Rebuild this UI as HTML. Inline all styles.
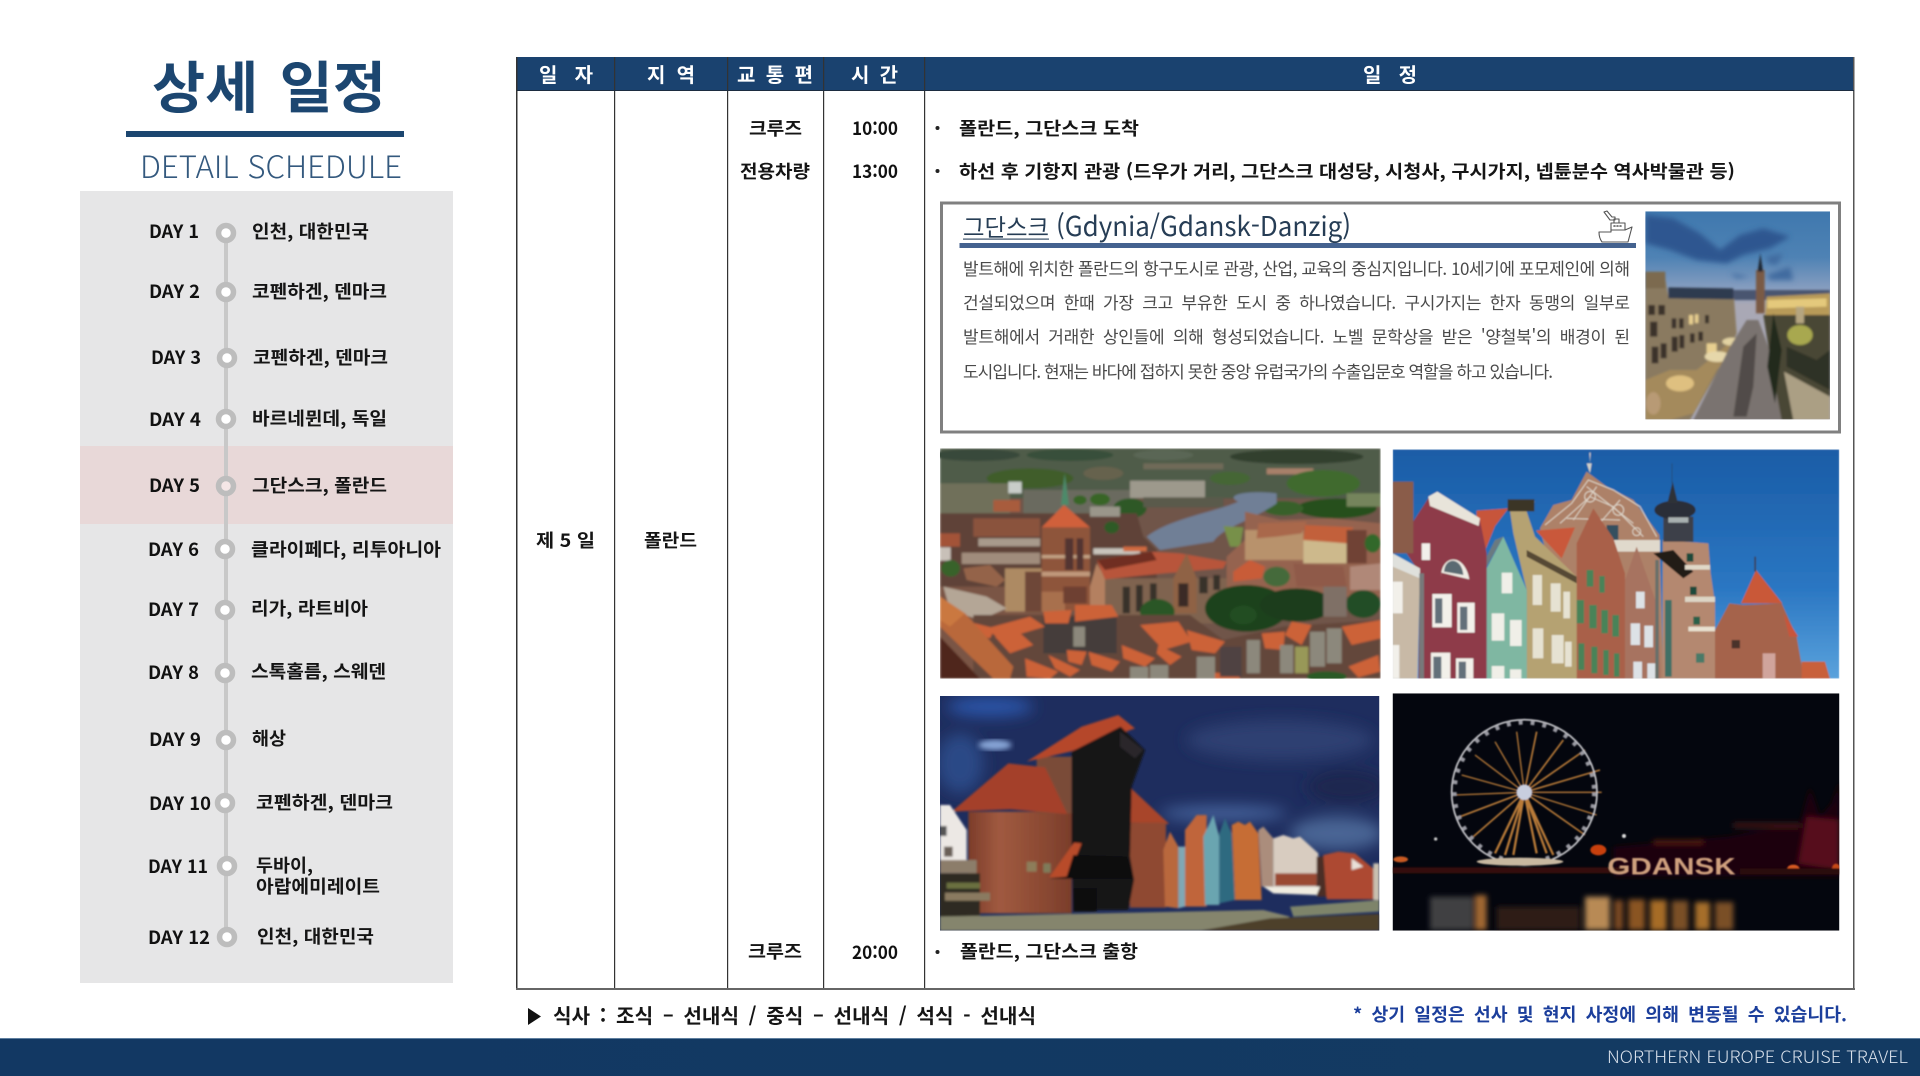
<!DOCTYPE html>
<html lang="ko"><head><meta charset="utf-8"><title>상세 일정</title>
<style>
html,body{margin:0;padding:0;background:#fff;width:1920px;height:1076px;overflow:hidden}
svg{display:block}
text{font-family:"Liberation Sans","Noto Sans CJK KR",sans-serif;white-space:pre}
.b{font-family:"Noto Sans CJK KR","Liberation Sans",sans-serif;font-weight:700;fill:#111;font-size:18px}
.h{font-family:"Noto Sans CJK KR","Liberation Sans",sans-serif;font-weight:700;fill:#fff;font-size:20px}
.k{font-family:"Noto Sans CJK KR","Liberation Sans",sans-serif;font-weight:700;fill:#151515;font-size:18px}
.t{font-family:"Noto Sans CJK KR","Liberation Sans",sans-serif;font-weight:400;fill:#4a4a4a;font-size:17px}
</style></head><body>
<svg width="1920" height="1076" viewBox="0 0 1920 1076" xmlns="http://www.w3.org/2000/svg">
<defs>
<filter id="bl" x="-2%" y="-2%" width="104%" height="104%"><feGaussianBlur stdDeviation="3"/></filter>
<filter id="bs" x="-2%" y="-2%" width="104%" height="104%"><feGaussianBlur stdDeviation="2"/></filter>
<filter id="bx" x="-30%" y="-30%" width="160%" height="160%"><feGaussianBlur stdDeviation="22"/></filter>
<filter id="bm" x="-10%" y="-10%" width="120%" height="120%"><feGaussianBlur stdDeviation="8"/></filter>
<linearGradient id="skyB" x1="0" y1="0" x2="0" y2="1"><stop offset="0" stop-color="#1a5ca6"/><stop offset=".6" stop-color="#2a76c2"/><stop offset="1" stop-color="#5aa2dc"/></linearGradient>
<linearGradient id="skyE" x1="0" y1="0" x2="0" y2="1"><stop offset="0" stop-color="#3f78ae"/><stop offset=".22" stop-color="#4e82b4"/><stop offset=".38" stop-color="#8a9fc0"/><stop offset=".45" stop-color="#a9a8b5"/></linearGradient>
<linearGradient id="brick" x1="0" y1="0" x2="1" y2="0"><stop offset="0" stop-color="#7c3c2a"/><stop offset=".3" stop-color="#a05a40"/><stop offset=".7" stop-color="#8c4a33"/><stop offset="1" stop-color="#7a3d2b"/></linearGradient>
<linearGradient id="foot" x1="0" y1="0" x2="1" y2="0"><stop offset="0" stop-color="#123863"/><stop offset="1" stop-color="#133a62"/></linearGradient>
<clipPath id="ca"><rect x="30" y="25" width="1322" height="691"/></clipPath>
<clipPath id="cb"><rect x="38" y="28" width="1340" height="688"/></clipPath>
<clipPath id="cc"><rect x="30" y="18" width="1318" height="704"/></clipPath>
<clipPath id="cd"><rect x="38" y="10" width="1340" height="712"/></clipPath>
<clipPath id="ce"><rect x="46" y="34" width="554" height="624"/></clipPath>
</defs>
<rect width="1920" height="1076" fill="#fff"/>

<!-- LEFT -->
<text x="152" y="108" textLength="234" lengthAdjust="spacingAndGlyphs" style="font-family:'Noto Sans CJK KR','Liberation Sans',sans-serif;font-weight:700;font-size:56px;word-spacing:5px;fill:#1c4670">상세 일정</text>
<rect x="126" y="131" width="278" height="6" fill="#1c4670"/>
<text x="140" y="178" textLength="262" lengthAdjust="spacingAndGlyphs" style="font-family:'Noto Sans CJK KR','Liberation Sans',sans-serif;font-size:31px;font-weight:300;fill:#34597e">DETAIL SCHEDULE</text>
<rect x="80" y="191" width="373" height="792" fill="#e6e6e7"/>
<rect x="80" y="446" width="373" height="78" fill="#e8d8d8"/>
<rect x="224" y="233" width="4" height="704" fill="#c8c8c8"/>
<g fill="#fff" stroke="#bdbdbd" stroke-width="5.5">
<circle cx="226" cy="233" r="7.5"/><circle cx="226" cy="292" r="7.5"/><circle cx="227" cy="358" r="7.5"/><circle cx="226" cy="419" r="7.5"/>
<circle cx="226" cy="486" r="7.5" fill="#f5e6e6"/><circle cx="225" cy="549" r="7.5"/><circle cx="225" cy="610" r="7.5"/><circle cx="225" cy="673" r="7.5"/>
<circle cx="226" cy="740" r="7.5"/><circle cx="225" cy="803" r="7.5"/><circle cx="227" cy="866" r="7.5"/><circle cx="227" cy="937" r="7.5"/>
</g>
<g>
<text class="b" x="149" y="238" textLength="50" lengthAdjust="spacingAndGlyphs">DAY 1</text>
<text class="b" x="149" y="298" textLength="51" lengthAdjust="spacingAndGlyphs">DAY 2</text>
<text class="b" x="151" y="364" textLength="50" lengthAdjust="spacingAndGlyphs">DAY 3</text>
<text class="b" x="149" y="426" textLength="52" lengthAdjust="spacingAndGlyphs">DAY 4</text>
<text class="b" x="149" y="492" textLength="51" lengthAdjust="spacingAndGlyphs">DAY 5</text>
<text class="b" x="148" y="556" textLength="51" lengthAdjust="spacingAndGlyphs">DAY 6</text>
<text class="b" x="148" y="616" textLength="51" lengthAdjust="spacingAndGlyphs">DAY 7</text>
<text class="b" x="148" y="679" textLength="51" lengthAdjust="spacingAndGlyphs">DAY 8</text>
<text class="b" x="149" y="746" textLength="52" lengthAdjust="spacingAndGlyphs">DAY 9</text>
<text class="b" x="149" y="810" textLength="62" lengthAdjust="spacingAndGlyphs">DAY 10</text>
<text class="b" x="148" y="873" textLength="60" lengthAdjust="spacingAndGlyphs">DAY 11</text>
<text class="b" x="148" y="944" textLength="62" lengthAdjust="spacingAndGlyphs">DAY 12</text>
<text class="k" x="252" y="238" textLength="117" lengthAdjust="spacingAndGlyphs">인천, 대한민국</text>
<text class="k" x="252" y="298" textLength="135" lengthAdjust="spacingAndGlyphs">코펜하겐, 덴마크</text>
<text class="k" x="253" y="364" textLength="135" lengthAdjust="spacingAndGlyphs">코펜하겐, 덴마크</text>
<text class="k" x="252" y="425" textLength="135" lengthAdjust="spacingAndGlyphs">바르네뮌데, 독일</text>
<text class="k" x="252" y="492" textLength="135" lengthAdjust="spacingAndGlyphs">그단스크, 폴란드</text>
<text class="k" x="251" y="556" textLength="190" lengthAdjust="spacingAndGlyphs">클라이페다, 리투아니아</text>
<text class="k" x="251" y="615" textLength="117" lengthAdjust="spacingAndGlyphs">리가, 라트비아</text>
<text class="k" x="251" y="678" textLength="135" lengthAdjust="spacingAndGlyphs">스톡홀름, 스웨덴</text>
<text class="k" x="252" y="745" textLength="34" lengthAdjust="spacingAndGlyphs">해상</text>
<text class="k" x="256" y="809" textLength="137" lengthAdjust="spacingAndGlyphs">코펜하겐, 덴마크</text>
<text class="k" x="256" y="872" textLength="57" lengthAdjust="spacingAndGlyphs">두바이,</text>
<text class="k" x="256" y="893" textLength="124" lengthAdjust="spacingAndGlyphs">아랍에미레이트</text>
<text class="k" x="257" y="943" textLength="117" lengthAdjust="spacingAndGlyphs">인천, 대한민국</text>
</g>

<!-- TABLE -->
<rect x="517" y="57" width="1337" height="34" fill="#1a426f"/>
<g fill="#333">
<rect x="516" y="57" width="1.5" height="932"/><rect x="614" y="57" width="1.2" height="932"/><rect x="727" y="57" width="1.2" height="932"/><rect x="823" y="57" width="1.2" height="932"/><rect x="924" y="57" width="1.2" height="932"/>
<rect x="1853" y="57" width="1.5" height="932" fill="#555"/><rect x="516" y="988" width="1339" height="2" fill="#666"/>
<rect x="517" y="90" width="1337" height="1" fill="#1c2c40"/>
</g>
<text class="h" x="539" y="82" textLength="54" lengthAdjust="spacing">일 자</text>
<text class="h" x="647" y="82" textLength="48" lengthAdjust="spacing">지 역</text>
<text class="h" x="737" y="82" textLength="76" lengthAdjust="spacing">교 통 편</text>
<text class="h" x="851" y="82" textLength="47" lengthAdjust="spacing">시 간</text>
<text class="h" x="1363" y="82" textLength="54" lengthAdjust="spacing">일 정</text>

<text class="k" x="536" y="547" textLength="59" lengthAdjust="spacingAndGlyphs">제 5 일</text>
<text class="k" x="644" y="547" textLength="53" lengthAdjust="spacingAndGlyphs">폴란드</text>
<text class="k" x="749" y="135" textLength="53" lengthAdjust="spacingAndGlyphs">크루즈</text>
<text class="k" x="740" y="178" textLength="70" lengthAdjust="spacingAndGlyphs">전용차량</text>
<text class="k" x="748" y="958" textLength="54" lengthAdjust="spacingAndGlyphs">크루즈</text>
<text class="b" x="852" y="135" textLength="46" lengthAdjust="spacingAndGlyphs">10:00</text>
<text class="b" x="852" y="178" textLength="46" lengthAdjust="spacingAndGlyphs">13:00</text>
<text class="b" x="852" y="959" textLength="46" lengthAdjust="spacingAndGlyphs">20:00</text>
<circle cx="937.500" cy="128" r="2" fill="#222"/><circle cx="937.500" cy="171" r="2" fill="#222"/><circle cx="937.500" cy="952" r="2" fill="#222"/>
<text class="k" x="959" y="135" textLength="180" lengthAdjust="spacingAndGlyphs">폴란드, 그단스크 도착</text>
<text class="k" x="959" y="178" textLength="776" lengthAdjust="spacingAndGlyphs">하선 후 기항지 관광 (드우가 거리, 그단스크 대성당, 시청사, 구시가지, 넵튠분수 역사박물관 등)</text>
<text class="k" x="960" y="958" textLength="178" lengthAdjust="spacingAndGlyphs">폴란드, 그단스크 출항</text>

<!-- INFO BOX -->
<rect x="941.500" y="203" width="898" height="229" fill="#fff" stroke="#808080" stroke-width="3"/>
<text x="963" y="236" textLength="86" lengthAdjust="spacingAndGlyphs" style="font-family:'Noto Sans CJK KR','Liberation Sans',sans-serif;font-size:24px;font-weight:400;fill:#263d55">그단스크</text>
<text x="1056" y="236" textLength="295" lengthAdjust="spacingAndGlyphs" style="font-family:'Noto Sans CJK KR','Liberation Sans',sans-serif;font-size:27px;font-weight:400;fill:#263d55">(Gdynia/Gdansk-Danzig)</text>
<rect x="963" y="238.500" width="86" height="1.200" fill="#3a5068"/>
<rect x="959.500" y="243" width="676.500" height="5" fill="#44628f"/>
<g fill="none" stroke="#555" stroke-width="1.100" stroke-linejoin="round" stroke-linecap="round">
<path d="M1599 232 L1611 232 L1611 230 L1625 230 L1632 227 L1628 242 L1602 242 Q1599 238 1599 232 Z"/>
<path d="M1611 230 V223 H1625 V230"/><path d="M1614 223 V219 H1619 V223"/>
<path d="M1604 212 L1607 211 L1612 217 L1615 217 L1615 220 L1610 220 Z"/>
<path d="M1614 226 h1 M1617 226 h1 M1620 226 h1" stroke-width="1.600"/>
</g>
<g>
<text class="t" x="963" y="275" textLength="667" lengthAdjust="spacing">발트해에 위치한 폴란드의 항구도시로 관광, 산업, 교육의 중심지입니다. 10세기에 포모제인에 의해</text>
<text class="t" x="963" y="309" textLength="667" lengthAdjust="spacing" style="word-spacing:4px">건설되었으며 한때 가장 크고 부유한 도시 중 하나였습니다. 구시가지는 한자 동맹의 일부로</text>
<text class="t" x="963" y="343" textLength="667" lengthAdjust="spacing" style="word-spacing:4px">발트해에서 거래한 상인들에 의해 형성되었습니다. 노벨 문학상을 받은 '양철북'의 배경이 된</text>
<text class="t" x="963" y="378" textLength="590" lengthAdjust="spacing">도시입니다. 현재는 바다에 접하지 못한 중앙 유럽국가의 수출입문호 역할을 하고 있습니다.</text>
</g>

<!-- PHOTO E: square at dusk -->
<g transform="translate(1630,200) scale(.33333)" clip-path="url(#ce)">
<rect x="46" y="34" width="554" height="624" fill="url(#skyE)"/>
<g filter="url(#bm)"><path d="M46 45 L130 55 L210 100 L270 150 L330 105 L400 85 L480 110 L420 145 L340 165 L290 190 L200 180 L120 150 L46 130 Z" fill="#2d5790"/>
<path d="M410 170 L460 160 L440 195 L415 190Z M300 220 L360 230 L320 235Z M410 225 L480 200 L490 240 L420 240Z" fill="#3f6a9f"/></g>
<g filter="url(#bl)">
<rect x="300" y="270" width="300" height="30" fill="#4a5570"/>
<path d="M46 225 L105 230 L115 290 L250 265 L312 295 L320 400 L260 520 L180 660 L46 660 Z" fill="#8a7a60"/>
<rect x="46" y="215" width="60" height="50" fill="#7c6a50"/>
<path d="M115 262 L310 265 L310 298 L115 295Z" fill="#2e3a50"/>
<g fill="#3a322a"><rect x="55" y="315" width="20" height="30"/><rect x="85" y="315" width="20" height="30"/><rect x="60" y="365" width="22" height="45"/><rect x="125" y="355" width="14" height="30"/><rect x="147" y="355" width="14" height="30"/><rect x="125" y="410" width="18" height="45"/><rect x="148" y="405" width="15" height="40"/><rect x="180" y="400" width="14" height="28"/><rect x="205" y="395" width="14" height="28"/><rect x="225" y="345" width="12" height="25"/><rect x="65" y="440" width="20" height="50"/><rect x="92" y="430" width="18" height="45"/></g>
<g fill="#e8cf90"><rect x="177" y="345" width="12" height="28"/><rect x="195" y="343" width="10" height="26"/><rect x="230" y="430" width="30" height="35"/></g>
<path d="M46 540 L120 510 L200 510 L250 470 L335 395 L345 420 L260 510 L190 640 L120 660 L46 660 Z" fill="#a48a5c"/>
<ellipse cx="150" cy="550" rx="42" ry="24" fill="#dfc080"/><ellipse cx="262" cy="470" rx="38" ry="16" fill="#e6d7aa"/><ellipse cx="305" cy="425" rx="28" ry="12" fill="#e2d2a2"/><ellipse cx="70" cy="610" rx="22" ry="34" fill="#b89a74"/>
<rect x="378" y="210" width="26" height="130" fill="#7a5a44"/><path d="M383 215 L391 160 L399 215Z" fill="#1c2533"/>
<path d="M410 290 L600 280 L600 350 L405 360Z" fill="#b89a58"/><path d="M412 300 L590 295 L590 320 L412 325Z" fill="#e4c97c"/>
<path d="M190 660 L300 440 L350 360 L385 360 L430 480 L470 660 Z" fill="#7a7370"/>
<path d="M400 345 L600 345 L600 660 L455 660 L425 500Z" fill="#4a4634"/>
<path d="M340 440 L380 400 L370 560 L350 650 L310 650Z" fill="#514b48"/>
<ellipse cx="510" cy="405" rx="38" ry="30" fill="#a8a850"/><rect x="498" y="320" width="24" height="50" fill="#b5a580"/>
<path d="M462 515 L600 590 L600 660 L490 660Z" fill="#ab9f84"/>
<path d="M470 440 L560 480 L600 450 L600 570 L470 500Z" fill="#2f3327"/>
<path d="M430 340 L455 450 L435 610 L412 500Z" fill="#23291e"/>
</g></g>

<!-- PHOTO A: aerial old town -->
<g transform="translate(930,440) scale(.33333)" clip-path="url(#ca)"><g filter="url(#bl)">
<rect x="30" y="25" width="1322" height="691" fill="#6f5548"/>
<rect x="30" y="25" width="1322" height="150" fill="#4f5c48"/>
<ellipse cx="140" cy="45" rx="130" ry="18" fill="#39483a"/><ellipse cx="420" cy="45" rx="130" ry="18" fill="#39503a"/><ellipse cx="700" cy="45" rx="90" ry="16" fill="#5a6654"/><ellipse cx="1100" cy="50" rx="200" ry="22" fill="#333f2f"/>
<ellipse cx="300" cy="115" rx="130" ry="30" fill="#3f5d2b"/><ellipse cx="520" cy="100" rx="60" ry="20" fill="#66624e"/><ellipse cx="900" cy="115" rx="60" ry="20" fill="#446636"/>
<rect x="640" y="70" width="240" height="18" fill="#6f6a58"/><rect x="1010" y="85" width="140" height="18" fill="#a8806a"/>
<ellipse cx="1180" cy="130" rx="110" ry="40" fill="#3f6a2d"/><ellipse cx="1220" cy="205" rx="120" ry="30" fill="#274f1e"/><ellipse cx="1060" cy="205" rx="60" ry="22" fill="#376029"/>
<rect x="30" y="130" width="210" height="90" fill="#6f705a"/><rect x="280" y="150" width="320" height="70" fill="#6a6b5e"/><rect x="1250" y="160" width="102" height="40" fill="#75845c"/>
<ellipse cx="600" cy="205" rx="50" ry="30" fill="#2d5826"/><ellipse cx="510" cy="178" rx="30" ry="18" fill="#386527"/><ellipse cx="450" cy="180" rx="20" ry="14" fill="#386527"/>
<rect x="600" y="122" width="225" height="52" fill="#9d998c"/><rect x="235" y="125" width="40" height="35" fill="#c8ccc8"/><rect x="190" y="180" width="80" height="35" fill="#a85c3c"/>
<rect x="640" y="172" width="240" height="30" fill="#5a5a4c"/>
<path d="M1040 160 C950 150 880 165 925 185 C860 215 720 235 650 290 L690 330 L850 305 C880 260 960 245 1040 190 Z" fill="#707f96"/>
<path d="M880 258 L940 262 L930 320 L900 320Z" fill="#77904a"/>
<path d="M30 220 L620 220 L640 290 L680 330 L680 460 L30 460Z" fill="#5f4338"/>
<rect x="130" y="235" width="200" height="55" fill="#8a533e"/><rect x="30" y="280" width="60" height="40" fill="#a35239"/><rect x="30" y="322" width="32" height="40" fill="#c8c0b8"/><rect x="95" y="338" width="235" height="34" fill="#a08c7c"/><rect x="145" y="295" width="185" height="24" fill="#a89a8c"/><rect x="480" y="200" width="90" height="30" fill="#9a968a"/><rect x="490" y="325" width="140" height="18" fill="#c8c4bc"/><rect x="580" y="320" width="70" height="14" fill="#d06a40"/>
<ellipse cx="62" cy="385" rx="28" ry="25" fill="#37622c"/><ellipse cx="545" cy="262" rx="22" ry="18" fill="#2f5a28"/>
<path d="M945 215 L1050 240 L1200 235 L1352 250 L1352 470 L890 470 L890 350 L945 300Z" fill="#956350"/>
<rect x="945" y="270" width="175" height="90" fill="#b8926c"/><rect x="1120" y="300" width="130" height="70" fill="#cdb98c"/>
<path d="M1125 255 L1270 262 L1250 310 L1120 300Z" fill="#c2603a"/><path d="M985 250 L1130 245 L1115 280 L1040 290 L980 295Z" fill="#a9684c"/><rect x="1250" y="270" width="60" height="100" fill="#6f4234"/>
<ellipse cx="1328" cy="310" rx="24" ry="28" fill="#33682a"/>
<path d="M1260 380 L1352 370 L1352 450 L1260 450Z" fill="#b08878"/>
<path d="M1090 370 L1240 380 L1250 440 L1100 440Z" fill="#8f5a48"/>
<path d="M910 395 L960 360 L1005 380 L995 415 L910 425Z" fill="#c85c38"/>
<path d="M30 440 L340 440 L340 716 L30 716Z" fill="#7a5544"/>
<rect x="225" y="385" width="115" height="130" fill="#ad8a64"/><rect x="285" y="395" width="55" height="120" fill="#6e4638"/>
<path d="M100 385 L180 375 L225 420 L200 440 L110 420Z" fill="#94644a"/>
<path d="M40 440 L170 470 L230 505 L150 540 L60 510Z" fill="#b4a696"/>
<rect x="335" y="262" width="145" height="250" fill="#8e543a"/>
<rect x="335" y="345" width="145" height="10" fill="#c2a284"/><rect x="335" y="395" width="145" height="14" fill="#c09a7c"/><rect x="335" y="455" width="70" height="60" fill="#a8704e"/>
<rect x="405" y="295" width="25" height="95" fill="#533630"/><rect x="440" y="295" width="20" height="95" fill="#533630"/><rect x="400" y="440" width="70" height="50" fill="#6e3f30"/>
<path d="M335 262 L402 195 L480 262Z" fill="#d0603a"/><path d="M404 100 L393 195 L417 195Z" fill="#4e8a6a"/>
<path d="M480 440 L500 370 L525 410 L525 500 L480 500Z" fill="#b48060"/>
<rect x="525" y="415" width="365" height="135" fill="#7f6450"/>
<path d="M500 360 L660 335 L750 340 L890 365 L880 385 L700 400 L525 418Z" fill="#b8553a"/>
<path d="M500 360 L665 335 L680 360 L525 390Z" fill="#6f2e22"/>
<path d="M730 415 L770 340 L800 415 L800 520 L730 520Z" fill="#8f6244"/><rect x="745" y="430" width="30" height="70" fill="#3a2b26"/>
<g fill="#38302c"><rect x="578" y="440" width="22" height="80"/><rect x="618" y="435" width="20" height="80"/><rect x="660" y="430" width="20" height="50"/><rect x="808" y="410" width="25" height="50"/><rect x="850" y="405" width="20" height="45"/></g>
<ellipse cx="682" cy="515" rx="52" ry="38" fill="#2a5725"/>
<ellipse cx="950" cy="505" rx="125" ry="70" fill="#1c421c"/><ellipse cx="1100" cy="495" rx="110" ry="50" fill="#1a3e1c"/><ellipse cx="1040" cy="410" rx="40" ry="30" fill="#446a3a"/><ellipse cx="1300" cy="492" rx="52" ry="42" fill="#204e26"/><ellipse cx="940" cy="525" rx="40" ry="28" fill="#244e24"/>
<rect x="1180" y="440" width="70" height="90" fill="#7f7066"/>
<path d="M130 525 L780 525 L880 600 L1060 560 L1352 540 L1352 716 L130 716Z" fill="#63463a"/>
<rect x="340" y="530" width="220" height="110" fill="#453c3a"/>
<g fill="#cc6238">
<path d="M170 565 L300 530 L345 560 L210 600Z"/><path d="M340 515 L425 510 L415 550 L345 550Z"/><path d="M435 495 L545 495 L565 530 L435 545Z"/><path d="M115 545 L195 565 L180 595 L125 580Z"/><path d="M195 590 L260 570 L310 615 L240 640Z"/><path d="M285 655 L385 695 L360 716 L290 710Z"/><path d="M355 645 L450 690 L420 710 L375 685Z"/><path d="M410 630 L470 635 L455 675 L415 665Z"/><path d="M475 635 L570 665 L545 695 L485 675Z"/><path d="M575 615 L675 655 L645 680 L580 655Z"/><path d="M630 555 L745 545 L785 605 L700 630Z"/><path d="M770 570 L885 605 L855 640 L785 630Z"/><path d="M685 615 L755 650 L720 675 L680 640Z"/><path d="M995 580 L1065 575 L1060 630 L1005 625Z"/><path d="M1085 545 L1145 555 L1115 615 L1065 585Z"/><path d="M1235 560 L1352 540 L1352 595 L1265 615Z"/><path d="M1255 680 L1345 645 L1350 695 L1285 712Z"/><path d="M845 698 L925 702 L930 716 L845 716Z"/>
</g>
<g fill="#8c887c"><rect x="600" y="680" width="55" height="36"/><rect x="660" y="675" width="55" height="41"/><rect x="800" y="650" width="55" height="66"/><rect x="430" y="560" width="35" height="60"/><rect x="950" y="600" width="40" height="100"/><rect x="1050" y="615" width="40" height="85"/><rect x="1140" y="575" width="45" height="105"/><rect x="1190" y="565" width="45" height="105"/></g>
<rect x="1095" y="620" width="40" height="80" fill="#989858"/><rect x="870" y="620" width="65" height="90" fill="#504242"/>
<ellipse cx="1190" cy="710" rx="60" ry="16" fill="#2c5a28"/>
<path d="M30 470 L105 520 L250 680 L240 716 L190 716 L30 560Z" fill="#b9683a"/><path d="M30 470 L105 520 L60 560 L30 540Z" fill="#ca7840"/><path d="M30 590 L150 716 L30 716Z" fill="#4f261c"/>
</g></g>

<!-- PHOTO B: colourful facades -->
<g transform="translate(1380,440) scale(.33333)" clip-path="url(#cb)"><g filter="url(#bs)">
<rect x="38" y="28" width="1340" height="688" fill="url(#skyB)"/>
<path d="M480 265 L520 195 L575 180 L620 95 L680 140 L760 180 L838 285 L850 716 L590 716Z" fill="#ad8168"/>
<g stroke="#ddd3c6" stroke-width="3" fill="none"><path d="M495 255 L575 190 L625 120 L700 150 L780 200 L830 290"/><path d="M540 250 L630 170 L700 200 L790 290"/><path d="M560 235 L720 240 M620 140 L760 250 M650 140 L580 240 M720 180 L650 260"/><circle cx="630" cy="170" r="16"/><circle cx="715" cy="210" r="16"/><circle cx="770" cy="275" r="12"/></g>
<rect x="680" y="255" width="35" height="48" fill="#34505e"/>
<path d="M630 100 L620 70 L635 70Z M630 70 L628 38 L632 38Z" fill="#d0d0c8"/>
<path d="M690 300 L840 300 L840 335 L690 335Z" fill="#e0d9cc"/>
<path d="M848 300 L985 310 L992 400 L1005 490 L1005 716 L848 716Z" fill="#b48870"/>
<path d="M820 340 L880 330 L940 395 L910 415Z" fill="#241a18"/>
<rect x="915" y="375" width="75" height="14" fill="#e0d8c8"/><rect x="920" y="340" width="20" height="25" fill="#1e4a3a"/><rect x="930" y="440" width="20" height="25" fill="#1e4a3a"/>
<rect x="925" y="560" width="80" height="14" fill="#e8e0d0"/><rect x="940" y="530" width="20" height="24" fill="#2a6048"/><rect x="948" y="640" width="25" height="28" fill="#4a7a68"/><rect x="915" y="470" width="90" height="16" fill="#ddd5c5"/>
<rect x="850" y="230" width="90" height="75" fill="#3c3f48"/><ellipse cx="885" cy="210" rx="62" ry="28" fill="#2c2f38"/><path d="M862 190 L878 125 L894 190Z" fill="#2e3138"/><rect x="875" y="70" width="2" height="60" fill="#284868"/><rect x="865" y="232" width="60" height="16" fill="#a8b0b0"/>
<rect x="855" y="480" width="20" height="230" fill="#3f7066"/>
<path d="M468 272 L585 262 L545 355Z" fill="#c9583a"/><path d="M290 212 L385 205 L345 258 L318 325 L288 295Z" fill="#c7553a"/>
<path d="M590 310 L640 205 L700 295 L735 400 L735 716 L590 716Z" fill="#a9604a"/>
<g fill="#4a8358"><rect x="620" y="390" width="20" height="50"/><rect x="658" y="408" width="16" height="50"/><rect x="590" y="480" width="22" height="70"/><rect x="628" y="495" width="22" height="70"/><rect x="664" y="510" width="20" height="70"/><rect x="697" y="525" width="20" height="65"/><rect x="595" y="610" width="18" height="80"/><rect x="634" y="620" width="18" height="80"/><rect x="670" y="630" width="16" height="75"/><rect x="702" y="640" width="16" height="70"/></g>
<path d="M735 420 L770 320 L835 505 L842 716 L735 716Z" fill="#a77360"/>
<g fill="#dde2e6"><rect x="768" y="455" width="26" height="50"/><rect x="752" y="550" width="28" height="65"/><rect x="793" y="557" width="26" height="65"/><rect x="760" y="665" width="26" height="51"/><rect x="802" y="670" width="24" height="46"/></g>
<rect x="826" y="360" width="10" height="356" fill="#66706a"/>
<path d="M1005 570 L1048 490 L1090 495 L1205 490 L1250 590 L1272 716 L1005 716Z" fill="#a5634c"/>
<path d="M1083 490 L1128 390 L1207 490Z" fill="#c95937"/><rect x="1123" y="350" width="5" height="45" fill="#3a3f50"/>
<path d="M1210 520 L1255 590 L1228 590Z" fill="#c8553a"/><rect x="1148" y="640" width="38" height="76" fill="#d0a49c"/><rect x="1055" y="600" width="25" height="25" fill="#4a302c"/>
<path d="M1265 665 L1335 665 L1350 716 L1265 716Z" fill="#c8603a"/>
<path d="M400 280 L385 180 L465 185 L440 215 L465 290 L590 410 L590 716 L440 716 L440 450Z" fill="#b5a272"/>
<rect x="383" y="178" width="80" height="36" fill="#3a3428"/>
<path d="M440 330 L590 410 L590 430 L440 350Z" fill="#574a36"/>
<g fill="#e6e2d2"><rect x="458" y="405" width="28" height="90"/><rect x="512" y="430" width="30" height="85"/><rect x="550" y="455" width="20" height="80"/><rect x="458" y="565" width="32" height="90"/><rect x="515" y="585" width="36" height="85"/><rect x="555" y="605" width="20" height="75"/></g>
<path d="M320 716 L320 385 L370 290 L440 450 L440 716Z" fill="#7fb7a2"/>
<path d="M320 380 L370 290 L345 300 L320 350Z" fill="#6a7a80"/>
<g fill="#f0efe8"><rect x="365" y="398" width="32" height="62"/><rect x="335" y="520" width="38" height="82"/><rect x="390" y="540" width="35" height="78"/><rect x="335" y="678" width="38" height="38"/><rect x="390" y="688" width="34" height="28"/></g>
<path d="M80 275 L145 175 L300 240 L320 340 L320 716 L115 716 L120 400 L80 340Z" fill="#8e3b48"/>
<path d="M145 170 L150 198 L296 258 L300 235 L172 155Z" fill="#e8e4da"/>
<rect x="38" y="125" width="62" height="215" fill="#8a5b48"/>
<path d="M38 345 L120 405 L112 716 L38 716Z" fill="#c8b9a6"/><path d="M38 340 L120 385 L120 415 L38 380Z" fill="#dfe0dc"/>
<g fill="#f2f0ea"><rect x="157" y="462" width="58" height="100"/><rect x="232" y="488" width="52" height="90"/><rect x="153" y="638" width="58" height="78"/><rect x="228" y="655" width="52" height="61"/><rect x="38" y="425" width="30" height="95"/><rect x="38" y="615" width="20" height="100"/><rect x="125" y="310" width="25" height="50"/></g>
<g fill="#64707a"><rect x="165" y="475" width="22" height="75"/><rect x="240" y="500" width="22" height="70"/><rect x="160" y="650" width="24" height="66"/><rect x="236" y="665" width="22" height="51"/></g>
<path d="M183 410 C185 340 255 340 268 418 L184 398Z" fill="#f0ece4"/><path d="M192 395 C195 350 245 350 250 405Z" fill="#5a6a72"/>
<rect x="118" y="400" width="14" height="316" fill="#77797a"/>
</g></g>

<!-- PHOTO C: crane -->
<g transform="translate(930,690) scale(.33333)" clip-path="url(#cc)">
<rect x="30" y="18" width="1318" height="704" fill="#1e2d5e"/>
<g filter="url(#bx)">
<ellipse cx="180" cy="50" rx="130" ry="30" fill="#2a55a8"/><ellipse cx="90" cy="220" rx="70" ry="90" fill="#2a4a86"/>
<ellipse cx="1050" cy="150" rx="280" ry="60" fill="#2e4172"/><ellipse cx="1250" cy="290" rx="120" ry="50" fill="#1c2850"/>
<ellipse cx="880" cy="370" rx="190" ry="22" fill="#46659e"/><ellipse cx="1220" cy="430" rx="140" ry="50" fill="#4a6594"/>
</g>
<g filter="url(#bm)"><ellipse cx="195" cy="165" rx="50" ry="16" fill="#86a4d6"/></g>
<g filter="url(#bl)">
<rect x="115" y="365" width="310" height="305" fill="url(#brick)"/>
<rect x="320" y="200" width="105" height="170" fill="#7a4c38"/>
<path d="M65 365 L235 220 L345 232 L412 372 L240 358Z" fill="#a4412a"/>
<path d="M290 215 L455 110 L565 75 L615 115 L420 185Z" fill="#b5472a"/>
<rect x="290" y="515" width="30" height="30" fill="#8d7d5a"/><rect x="340" y="520" width="22" height="28" fill="#7f7a5a"/>
<path d="M598 290 L718 402 L600 398Z" fill="#a8442c"/>
<rect x="600" y="398" width="108" height="255" fill="#8f4a32"/>
<path d="M425 185 L572 110 L645 180 L605 290 L600 500 L612 570 L595 660 L430 660 L425 455Z" fill="#121216"/>
<path d="M570 125 L640 180 L615 205 L570 170Z" fill="#2a282c"/>
<path d="M358 562 L432 458 L455 460 L415 560Z" fill="#b84c2c"/><path d="M358 566 L612 566 L590 500 L430 495 L410 560Z" fill="#0e0e10"/>
<path d="M700 480 L720 425 L745 470 L745 655 L705 650Z" fill="#b9683c"/>
<path d="M745 470 L765 470 L765 650 L745 655Z" fill="#7fa8b4"/>
<path d="M765 420 L800 375 L830 375 L830 650 L765 650Z" fill="#c0653a"/>
<path d="M820 440 L850 375 L868 440 L868 645 L825 645Z" fill="#6aa5b0"/>
<path d="M868 430 L885 385 L905 430 L915 630 L868 640Z" fill="#2f6b80"/>
<path d="M905 405 L925 395 L945 405 L960 395 L985 430 L995 630 L915 630Z" fill="#c66d35"/>
<path d="M985 420 L1000 410 L1030 445 L1030 590 L995 590Z" fill="#ab8d7c"/>
<path d="M1030 445 L1060 435 L1090 445 L1110 440 L1165 490 L1160 590 L1030 590Z" fill="#d8ccc0"/>
<rect x="1035" y="550" width="125" height="38" fill="#9a4830"/>
<rect x="1160" y="500" width="30" height="120" fill="#4c2d26"/>
<path d="M1180 495 L1225 485 L1275 490 L1335 540 L1335 628 L1190 628Z" fill="#ad4a30"/>
<path d="M1265 505 L1300 530 L1265 540Z" fill="#e8e0d8"/>
<path d="M1000 590 L1170 590 L1160 615 L1030 610Z" fill="#f0ece0"/>
<rect x="1330" y="520" width="18" height="110" fill="#c8c0b0"/>
<path d="M30 345 L60 345 L110 420 L110 515 L30 515Z" fill="#ece8e4"/><rect x="30" y="408" width="20" height="30" fill="#555"/><rect x="42" y="470" width="26" height="30" fill="#6a6058"/>
<rect x="30" y="510" width="110" height="40" fill="#8c7d6a"/><rect x="30" y="550" width="120" height="130" fill="#2e2a24"/><rect x="45" y="608" width="135" height="24" fill="#8a7a60"/><rect x="50" y="578" width="100" height="18" fill="#6a7040"/>
<path d="M30 680 L1000 660 L1080 680 L1000 722 L30 722Z" fill="#85856d"/><path d="M1080 650 L1348 630 L1348 665 L1090 680Z" fill="#7e846a"/>
<path d="M810 722 L1020 685 L1348 672 L1348 722Z" fill="#4d3f2a"/>
<rect x="430" y="595" width="70" height="70" fill="#0d0d10"/>
</g></g>

<!-- PHOTO D: wheel at night -->
<g transform="translate(1380,690) scale(.33333)" clip-path="url(#cd)">
<rect x="38" y="10" width="1340" height="712" fill="#04060e"/>
<g filter="url(#bm)">
<path d="M700 470 L1040 440 L1260 400 L1290 290 L1320 380 L1355 340 L1378 270 L1378 560 L700 560Z" fill="#1a0608"/>
<path d="M1255 520 L1280 380 L1378 390 L1378 540Z" fill="#56101a"/>
<rect x="1060" y="398" width="200" height="16" fill="#3c1412"/><rect x="820" y="450" width="150" height="12" fill="#561a10"/>
<rect x="150" y="620" width="130" height="100" fill="#3f4042"/><rect x="285" y="615" width="35" height="105" fill="#a06830"/>
<rect x="350" y="650" width="250" height="70" fill="#2f1e18"/><rect x="615" y="620" width="75" height="100" fill="#b88a54"/>
<rect x="702" y="630" width="28" height="90" fill="#7a4820"/><rect x="745" y="628" width="50" height="92" fill="#8a5424"/><rect x="810" y="630" width="50" height="92" fill="#a66c28"/><rect x="875" y="632" width="50" height="90" fill="#7a5028"/><rect x="945" y="636" width="45" height="84" fill="#a66e2a"/><rect x="1005" y="636" width="55" height="84" fill="#7a5028"/>
</g>
<g filter="url(#bs)">
<g stroke="#b87a38" fill="none">
<path stroke-width="7" d="M433 307 L345 490 M433 307 L375 495 M433 307 L400 495 M433 307 L500 490 M433 307 L520 495 M433 307 L470 490"/>
<path stroke-width="5" d="M433 307 L240 380 M433 307 L280 440 M433 307 L615 435 M433 307 L660 240 M433 307 L615 180 M433 307 L550 150 M433 307 L470 125"/>
<path stroke-width="4" d="M433 307 L225 315 M433 307 L665 307 M433 307 L245 255 M433 307 L285 195 M433 307 L345 155 M433 307 L410 125 M433 307 L650 375"/>
</g>
<circle cx="433" cy="307" r="218" fill="none" stroke="#d0d0d4" stroke-width="5"/>
<circle cx="433" cy="307" r="210" fill="none" stroke="#9a9aa2" stroke-width="14" stroke-dasharray="12 24"/>
<circle cx="433" cy="307" r="23" fill="#c8cede"/>
<ellipse cx="420" cy="515" rx="130" ry="12" fill="#c8b8a0"/>
<circle cx="167" cy="447" r="5" fill="#ccc"/><circle cx="732" cy="438" r="6" fill="#ddd"/>
<ellipse cx="62" cy="508" rx="22" ry="9" fill="#c85a20"/><ellipse cx="655" cy="480" rx="24" ry="16" fill="#c8400f"/><ellipse cx="1240" cy="535" rx="18" ry="11" fill="#d85a20"/><ellipse cx="1368" cy="535" rx="12" ry="14" fill="#c84a18"/>
<rect x="38" y="532" width="700" height="18" fill="#34100a"/><rect x="1080" y="535" width="300" height="18" fill="#2a0d0a"/>
<text x="682" y="553" textLength="385" lengthAdjust="spacingAndGlyphs" style="font-size:72px;font-weight:700;fill:#cfa07e">GDANSK</text>
</g></g>

<!-- BOTTOM -->
<path d="M528 1008 L541 1016.500 L528 1025 Z" fill="#111"/>
<text x="553" y="1023" textLength="483" lengthAdjust="spacingAndGlyphs" style="font-family:'Noto Sans CJK KR','Liberation Sans',sans-serif;font-weight:700;font-size:20px;word-spacing:4px;fill:#151515">식사 : 조식 – 선내식 / 중식 – 선내식 / 석식 - 선내식</text>
<text x="1353" y="1021" textLength="494" lengthAdjust="spacingAndGlyphs" style="font-family:'Noto Sans CJK KR','Liberation Sans',sans-serif;font-weight:700;font-size:18px;word-spacing:4px;fill:#1c3f9c">* 상기 일정은 선사 및 현지 사정에 의해 변동될 수 있습니다.</text>
<rect x="0" y="1038" width="1920" height="38" fill="url(#foot)"/>
<rect x="0" y="1038" width="1920" height="1" fill="#5f7f9f"/>
<text x="1607" y="1063" textLength="301" lengthAdjust="spacingAndGlyphs" style="font-family:'Noto Sans CJK KR','Liberation Sans',sans-serif;font-size:17px;font-weight:300;fill:#d8e0ea">NORTHERN EUROPE CRUISE TRAVEL</text>
</svg>
</body></html>
